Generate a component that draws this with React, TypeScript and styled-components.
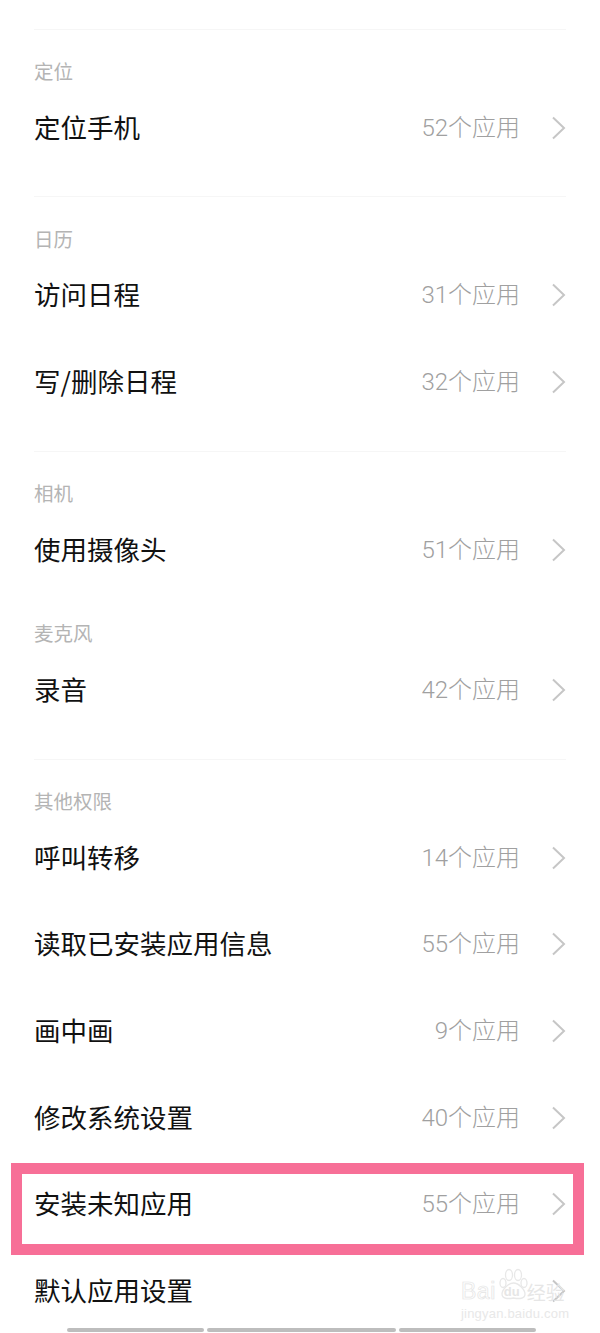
import React from 'react';
import styled, { createGlobalStyle } from 'styled-components';

const GlobalStyle = createGlobalStyle`
  html, body {
    margin: 0;
    padding: 0;
    background: #fff;
  }
  body {
    font-family: "Noto Sans CJK SC", "Noto Sans", sans-serif;
  }
`;

const Page = styled.div`
  position: relative;
  width: 600px;
  height: 1333px;
  box-sizing: border-box;
  padding: 29px 34px 0;
  overflow: hidden;
  background: #fff;
`;

const Section = styled.section<{ $divided?: boolean; $tail?: number }>`
  border-top: ${({ $divided }) => ($divided ? '1px solid #f6f6f6' : '0 none')};
  padding-bottom: ${({ $tail }) => $tail ?? 25}px;
`;

const SectionLabel = styled.div<{ $top?: number }>`
  height: 28px;
  padding-top: ${({ $top }) => $top ?? 27}px;
  font-size: 19.5px;
  line-height: 28px;
  color: #b4b4b4;
`;

const Row = styled.div`
  position: relative;
  display: flex;
  align-items: center;
  height: 86.6px;
`;

const Title = styled.span`
  flex: 1;
  padding-bottom: 3px;
  font-size: 26.5px;
  line-height: 36px;
  color: #111;
`;

const Count = styled.span`
  padding-bottom: 1px;
  font-family: Roboto, "Noto Sans CJK SC", sans-serif;
  font-size: 24px;
  line-height: 36px;
  font-weight: 300;
  color: #a0a0a0;
`;

const Chevron = styled.svg`
  flex: 0 0 auto;
  width: 15px;
  height: 24px;
  margin-left: 31px;
  margin-bottom: 1px;
  fill: none;
  stroke: #c6c6c6;
  stroke-width: 2;
`;

const Highlight = styled.div`
  position: absolute;
  left: -23px;
  right: -18px;
  top: 2px;
  bottom: -7px;
  border: 11px solid #f76f97;
  pointer-events: none;
`;

const HomeBar = styled.div`
  position: absolute;
  left: 67px;
  bottom: 1px;
  display: flex;
  gap: 3px;
`;

const HomeSegment = styled.div<{ $width: number }>`
  width: ${({ $width }) => $width}px;
  height: 4px;
  border-radius: 2px;
  background: #bdbdbd;
`;

const Watermark = styled.div`
  position: absolute;
  left: 461px;
  top: 1266px;
  width: 108px;
  pointer-events: none;
`;

const BrandRow = styled.div`
  display: flex;
  align-items: flex-end;
  height: 38px;
`;

const BrandLatin = styled.span`
  font-family: "Liberation Sans", sans-serif;
  font-size: 23px;
  line-height: 26px;
  letter-spacing: 0.5px;
  color: #fff;
  -webkit-text-stroke: 0.7px #e4e4e4;
`;

const BrandCjk = styled.span`
  margin-left: -3px;
  font-size: 19px;
  line-height: 24px;
  color: #e6e6e6;
`;

const PawBox = styled.span`
  position: relative;
  flex: 0 0 auto;
  width: 34px;
  height: 32px;
  margin-bottom: 4px;
`;

const PawDrawing = styled.svg`
  display: block;
  width: 34px;
  height: 32px;
  fill: none;
  stroke: #e8e8e8;
  stroke-width: 1.3;
`;

const PawText = styled.span`
  position: absolute;
  left: 8px;
  bottom: 1px;
  font-family: "Liberation Sans", sans-serif;
  font-size: 13px;
  line-height: 14px;
  font-weight: 700;
  color: #e6e6e6;
`;

const WatermarkUrl = styled.div`
  margin-top: 2px;
  font-family: "Liberation Sans", sans-serif;
  font-size: 13px;
  line-height: 15px;
  letter-spacing: 0.2px;
  white-space: nowrap;
  color: #e8e8e8;
`;

type Item = { title: string; count: string; marked?: boolean };

type Group = { label: string; divided: boolean; tail: number; top?: number; items: Item[] };

const groups: Group[] = [
  { label: '定位', divided: true, tail: 24, items: [{ title: '定位手机', count: '52个应用' }] },
  {
    label: '日历',
    divided: true,
    tail: 25,
    top: 28,
    items: [
      { title: '访问日程', count: '31个应用' },
      { title: '写/删除日程', count: '32个应用' },
    ],
  },
  { label: '相机', divided: true, tail: 0, items: [{ title: '使用摄像头', count: '51个应用' }] },
  { label: '麦克风', divided: false, tail: 25, top: 26, items: [{ title: '录音', count: '42个应用' }] },
  {
    label: '其他权限',
    divided: true,
    tail: 0,
    items: [
      { title: '呼叫转移', count: '14个应用' },
      { title: '读取已安装应用信息', count: '55个应用' },
      { title: '画中画', count: '9个应用' },
      { title: '修改系统设置', count: '40个应用' },
      { title: '安装未知应用', count: '55个应用', marked: true },
      { title: '默认应用设置', count: '' },
    ],
  },
];

function ListRow({ title, count, marked }: Item) {
  return (
    <Row>
      <Title>{title}</Title>
      {count && <Count>{count}</Count>}
      <Chevron viewBox="0 0 15 24" aria-hidden>
        <path d="M2 1.5 L13 12 L2 22.5" />
      </Chevron>
      {marked && <Highlight />}
    </Row>
  );
}

export default function App() {
  return (
    <Page>
      <GlobalStyle />
      {groups.map((group) => (
        <Section key={group.label} $divided={group.divided} $tail={group.tail}>
          <SectionLabel $top={group.top}>{group.label}</SectionLabel>
          {group.items.map((item) => (
            <ListRow key={item.title} {...item} />
          ))}
        </Section>
      ))}
      <Watermark>
        <BrandRow>
          <BrandLatin>Bai</BrandLatin>
          <PawBox>
            <PawDrawing viewBox="0 0 34 32" aria-hidden>
              <ellipse cx="7" cy="15" rx="3" ry="4.5" />
              <ellipse cx="13" cy="7" rx="3.5" ry="5.5" />
              <ellipse cx="22" cy="7" rx="3.5" ry="5.5" />
              <ellipse cx="28" cy="15" rx="3" ry="4.5" />
              <path d="M17.5 15 C12 15 6 22 6 26 C6 31 12 31 17.5 30 C23 31 29 31 29 26 C29 22 23 15 17.5 15 Z" />
            </PawDrawing>
            <PawText>du</PawText>
          </PawBox>
          <BrandCjk>经验</BrandCjk>
        </BrandRow>
        <WatermarkUrl>jingyan.baidu.com</WatermarkUrl>
      </Watermark>
      <HomeBar>
        <HomeSegment $width={137} />
        <HomeSegment $width={189} />
        <HomeSegment $width={137} />
      </HomeBar>
    </Page>
  );
}
